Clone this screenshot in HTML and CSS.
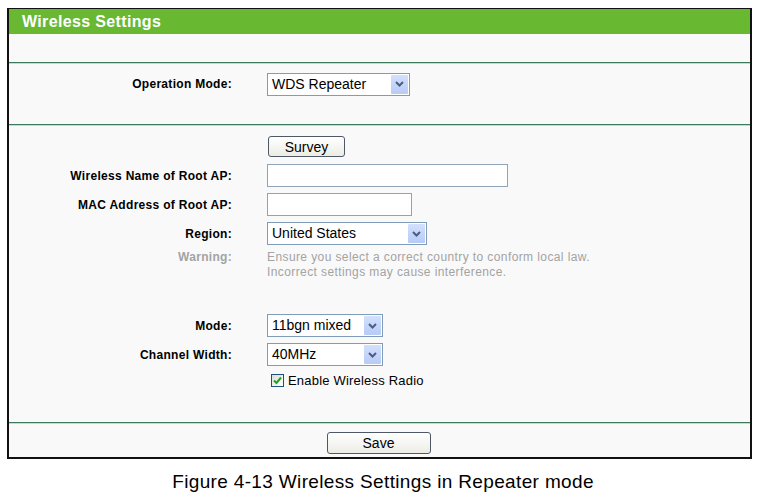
FILE: index.html
```html
<!DOCTYPE html>
<html>
<head>
<meta charset="utf-8">
<link rel="stylesheet" href="styles.css">
</head>
<body>
<div class="frame">
  <div class="header">Wireless Settings</div>
  <div class="sec sec-top"></div>
  <div class="rule"></div>
  <div class="sec sec-op">
    <div class="row row-24">
      <div class="label">Operation Mode:</div>
      <div class="select w143"><span class="val">WDS Repeater</span><span class="arrow"><svg width="9" height="6" viewBox="0 0 9 6"><path d="M1 1 L4.5 4.5 L8 1" fill="none" stroke="#4a5d86" stroke-width="2"/></svg></span></div>
    </div>
  </div>
  <div class="rule"></div>
  <div class="sec sec-main">
    <div class="row">
      <div class="label"></div>
      <button class="btn btn-survey">Survey</button>
    </div>
    <div class="row">
      <div class="label">Wireless Name of Root AP:</div>
      <div class="input w241"></div>
    </div>
    <div class="row">
      <div class="label">MAC Address of Root AP:</div>
      <div class="input w145"></div>
    </div>
    <div class="row">
      <div class="label">Region:</div>
      <div class="select w160"><span class="val">United States</span><span class="arrow"><svg width="9" height="6" viewBox="0 0 9 6"><path d="M1 1 L4.5 4.5 L8 1" fill="none" stroke="#4a5d86" stroke-width="2"/></svg></span></div>
    </div>
    <div class="row-warn">
      <div class="label gray">Warning:</div>
      <div class="warn">Ensure you select a correct country to conform local law.<br>Incorrect settings may cause interference.</div>
    </div>
    <div class="spacer"></div>
    <div class="row">
      <div class="label">Mode:</div>
      <div class="select w116"><span class="val">11bgn mixed</span><span class="arrow"><svg width="9" height="6" viewBox="0 0 9 6"><path d="M1 1 L4.5 4.5 L8 1" fill="none" stroke="#4a5d86" stroke-width="2"/></svg></span></div>
    </div>
    <div class="row">
      <div class="label">Channel Width:</div>
      <div class="select w116"><span class="val">40MHz</span><span class="arrow"><svg width="9" height="6" viewBox="0 0 9 6"><path d="M1 1 L4.5 4.5 L8 1" fill="none" stroke="#4a5d86" stroke-width="2"/></svg></span></div>
    </div>
    <div class="row row-22">
      <div class="label"></div>
      <div class="check-wrap">
        <span class="checkbox"><svg width="11" height="11" viewBox="0 0 11 11"><path d="M2 5.5 L4.5 8 L9 2.5" fill="none" stroke="#1fa31f" stroke-width="2"/></svg></span>
        <span class="check-text">Enable Wireless Radio</span>
      </div>
    </div>
  </div>
  <div class="rule"></div>
  <div class="sec sec-save">
    <button class="btn btn-save">Save</button>
  </div>
</div>
<div class="caption">Figure 4-13 Wireless Settings in Repeater mode</div>
</body>
</html>
```

FILE: styles.css
```css
html, body {
  margin: 0;
  padding: 0;
  background: #ffffff;
  font-family: "Liberation Sans", Arial, sans-serif;
  color: #000;
}
.frame {
  margin: 8px 0 0 7px;
  width: 741px;
  border: 2px solid #111;
  border-top-width: 1px;
  background: #f9f9f9;
}
.header {
  height: 25px;
  background: #68b832;
  color: #fff;
  font-weight: bold;
  font-size: 16px;
  letter-spacing: 0.35px;
  line-height: 25px;
  padding-left: 13px;
}
.sec-top { height: 28px; }
.rule {
  height: 0;
  border-top: 1px solid #3c7a5c;
  border-bottom: 1px solid #b3e2cd;
}
.sec-op {
  height: 60px;
  padding-top: 8px;
  box-sizing: border-box;
}
.sec-main {
  height: 296px;
  padding-top: 6px;
  box-sizing: border-box;
}
.sec-save {
  height: 33px;
  padding-top: 8px;
  box-sizing: border-box;
  display: flex;
  justify-content: center;
}
.row {
  display: flex;
  align-items: center;
  height: 29px;
}
.row-24 { height: 24px; }
.row-22 { height: 22px; }
.label {
  width: 223px;
  flex: none;
  text-align: right;
  font-weight: bold;
  font-size: 12px;
  letter-spacing: 0.3px;
  margin-right: 35px;
}
.gray { color: #a3a3a3; }
.row-warn {
  display: flex;
  align-items: flex-start;
  height: 32px;
  padding-top: 2px;
  box-sizing: border-box;
  line-height: 15px;
}
.warn {
  font-size: 12px;
  letter-spacing: 0.4px;
  color: #a3a3a3;
}
.spacer { height: 31px; }
.select {
  height: 23px;
  box-sizing: border-box;
  border: 1px solid #7f9db9;
  background: #fff;
  display: flex;
  align-items: stretch;
  justify-content: space-between;
  font-size: 14px;
}
.val {
  padding-left: 4px;
  line-height: 21px;
}
.arrow {
  width: 17px;
  margin: 1px;
  background: linear-gradient(#d3e0fd, #b7cbf6);
  border-radius: 1px;
  display: flex;
  align-items: center;
  justify-content: center;
}
.w143 { width: 143px; }
.w160 { width: 160px; }
.w116 { width: 116px; }
.w241 { width: 241px; }
.w145 { width: 145px; }
.input {
  height: 23px;
  box-sizing: border-box;
  border: 1px solid #8fa3b9;
  background: #fff;
}
.btn {
  font-family: "Liberation Sans", Arial, sans-serif;
  font-size: 14px;
  color: #000;
  border: 1px solid #4f5966;
  border-radius: 3px;
  background: linear-gradient(#ffffff, #ecece6);
  padding: 0;
  box-sizing: border-box;
}
.btn-survey {
  width: 77px;
  height: 21px;
  margin-left: 1px;
}
.btn-save {
  width: 104px;
  height: 22px;
  margin-left: -2px;
}
.check-wrap {
  display: flex;
  align-items: center;
  margin-left: 4px;
}
.checkbox {
  width: 13px;
  height: 13px;
  box-sizing: border-box;
  border: 1px solid #1c5180;
  background: linear-gradient(135deg, #dcdcd7, #ffffff);
  display: flex;
  align-items: center;
  justify-content: center;
  margin-right: 4px;
}
.check-text {
  font-size: 13px;
  letter-spacing: 0.2px;
}
.caption {
  text-align: center;
  font-size: 19px;
  letter-spacing: 0.35px;
  margin-top: 12px;
  padding-left: 6px;
}
```
